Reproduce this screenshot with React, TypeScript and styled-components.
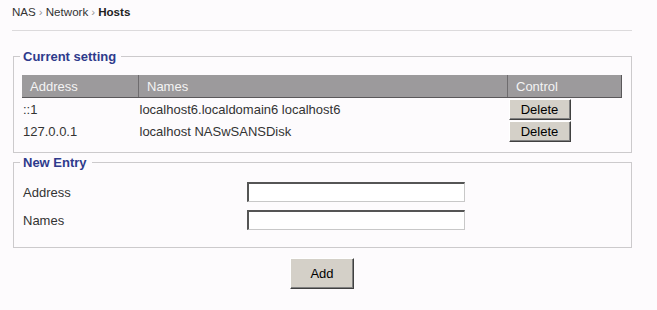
import styled, { createGlobalStyle } from 'styled-components';

const GlobalStyle = createGlobalStyle`
  html, body {
    margin: 0;
    padding: 0;
    background: #fdfbfd;
  }
  body {
    font-family: "Liberation Sans", Arial, sans-serif;
    color: #333;
  }
`

const Page = styled.div`
  width: 620px;
  margin-left: 12px;
  padding-top: 5px;
`

const Breadcrumb = styled.div`
  font-size: 11.6px;
  color: #333;
  line-height: 14px;
  padding-bottom: 11px;
  border-bottom: 1px solid #dcdadc;
  span.sep {
    color: #999;
    margin: 0 3px;
  }
  b {
    color: #222;
  }
`

const Group = styled.fieldset<{ $top: number }>`
  margin: ${p => p.$top}px 0 0 1px;
  padding: 11px 9px 10px 8px;
  border: 1px solid #cccacc;
  min-width: 0;
`

const Legend = styled.legend`
  font-size: 13px;
  font-weight: bold;
  color: #2e3a8c;
  padding: 0 5px 0 3px;
  margin-left: -2px;
  line-height: 15px;
`

const HostTable = styled.table`
  width: 600px;
  border-collapse: collapse;
  font-size: 13px;
  th {
    background: #9c9a9c;
    color: #f4f4f4;
    font-weight: normal;
    text-align: left;
    height: 22px;
    padding: 0 0 0 8px;
    border-left: 1px solid #6e6c6e;
    border-bottom: 1px solid #5a585a;
  }
  th:first-child {
    border-left: none;
  }
  th:last-child {
    border-right: 1px solid #5a585a;
  }
  td {
    height: 22px;
    padding: 0 0 0 1px;
    color: #333;
  }
`

const HeadCell = styled.th<{ $w?: number }>`
  width: ${p => (p.$w ? `${p.$w}px` : 'auto')};
`

const RaisedButton = styled.button<{ $w: number; $h: number }>`
  width: ${p => p.$w}px;
  height: ${p => p.$h}px;
  background: #d4d0c8;
  border: 1px solid;
  border-color: #fff #404040 #404040 #fff;
  box-shadow: inset -1px -1px 0 #808080;
  font-family: "Liberation Sans", Arial, sans-serif;
  font-size: 13px;
  color: #000;
  padding: 0;
  margin: 0;
  display: block;
`

const FormRow = styled.div`
  display: flex;
  align-items: center;
  height: 28px;
  font-size: 13px;
  color: #333;
  label {
    width: 224px;
    padding-left: 1px;
  }
`

const Field = styled.input`
  width: 218px;
  height: 20px;
  box-sizing: border-box;
  border: 2px solid;
  border-color: #555 #c8c8c8 #c8c8c8 #555;
  border-width: 2px 1px 1px 2px;
  background: #fff;
  margin: 0;
`

const Entries = styled.div`
  margin-top: -3px;
  padding-bottom: 3px;
`

const Actions = styled.div`
  display: flex;
  justify-content: center;
  margin-top: 10px;
`

const hosts = [
  { address: '::1', names: 'localhost6.localdomain6 localhost6' },
  { address: '127.0.0.1', names: 'localhost NASwSANSDisk' },
]

export default function App() {
  return (
    <>
      <GlobalStyle />
      <Page>
        <Breadcrumb>
          NAS<span className="sep">›</span>Network<span className="sep">›</span><b>Hosts</b>
        </Breadcrumb>
        <Group $top={18}>
          <Legend>Current setting</Legend>
          <HostTable>
            <thead>
              <tr>
                <HeadCell $w={108}>Address</HeadCell>
                <HeadCell>Names</HeadCell>
                <HeadCell $w={105}>Control</HeadCell>
              </tr>
            </thead>
            <tbody>
              {hosts.map(h => (
                <tr key={h.address}>
                  <td>{h.address}</td>
                  <td>{h.names}</td>
                  <td>
                    <RaisedButton $w={62} $h={21}>Delete</RaisedButton>
                  </td>
                </tr>
              ))}
            </tbody>
          </HostTable>
        </Group>
        <Group $top={2}>
          <Legend>New Entry</Legend>
          <Entries>
            <FormRow>
              <label>Address</label>
              <Field type="text" />
            </FormRow>
            <FormRow>
              <label>Names</label>
              <Field type="text" />
            </FormRow>
          </Entries>
        </Group>
        <Actions>
          <RaisedButton $w={64} $h={31}>Add</RaisedButton>
        </Actions>
      </Page>
    </>
  )
}
